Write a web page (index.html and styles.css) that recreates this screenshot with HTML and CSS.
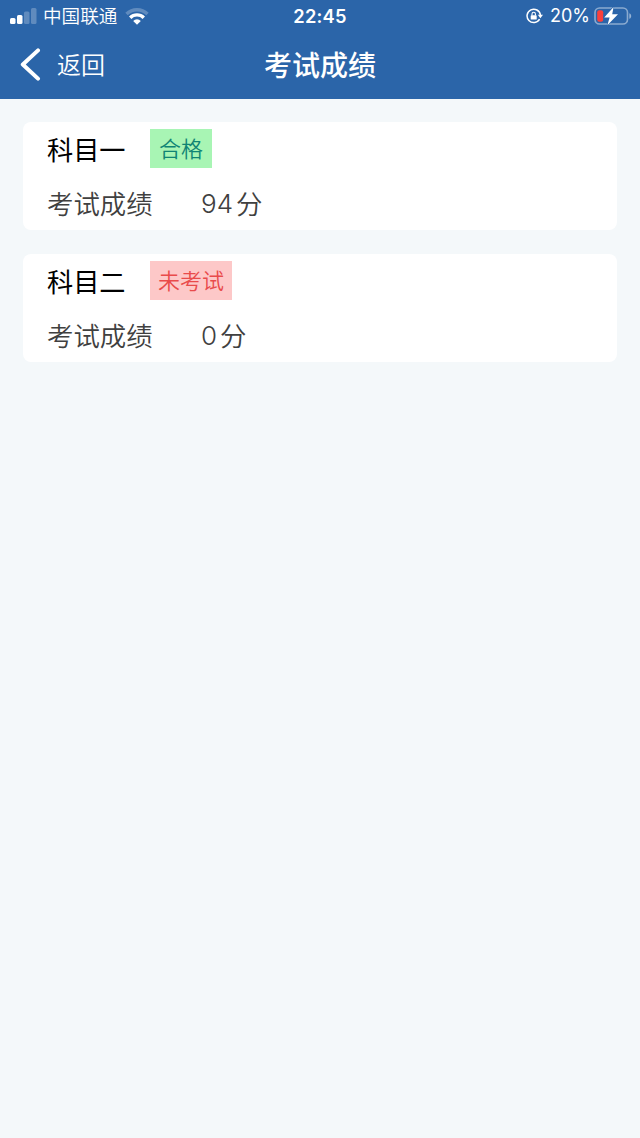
FILE: index.html
```html
<!DOCTYPE html>
<html lang="zh-CN">
<head>
  <meta charset="UTF-8" />
  <meta name="viewport" content="width=device-width, initial-scale=1.0" />
  <title>考试成绩</title>
  <link rel="stylesheet" href="styles.css">
</head>
<body>
  <header class="header">
    <div class="status-bar">
      <div class="status-left">
        <svg class="signal" width="27" height="16" viewBox="0 0 27 16" fill="#fff">
          <rect x="0" y="10" width="5.5" height="6" rx="1.5"/>
          <rect x="7" y="7" width="5.5" height="9" rx="1.5"/>
          <rect x="14" y="3.5" width="5.5" height="12.5" rx="1.5" opacity=".25"/>
          <rect x="21" y="0" width="5.5" height="16" rx="1.5" opacity=".25"/>
        </svg>
        <span class="carrier">中国联通</span>
        <svg class="wifi" width="24" height="17" viewBox="0 0 24 17" fill="none" stroke="#fff" stroke-width="3.4">
          <path d="M1.5 6a15 15 0 0 1 21 0" opacity=".25"/>
          <path d="M5.2 9.7a9.7 9.7 0 0 1 13.6 0"/>
          <path d="M8.2 12.9a5.4 5.4 0 0 1 7.6 0L12 16.7z" fill="#fff" stroke="none"/>
        </svg>
      </div>
      <span class="time">22:45</span>
      <div class="status-right">
        <svg class="lock" width="17" height="16" viewBox="0 0 17 16" fill="none" stroke="#fff">
          <path d="M13.6 11.2A6.7 6.7 0 1 1 14.4 7" stroke-width="1.5"/>
          <path d="M11.8 6.8h5.2l-2.6 3.4z" fill="#fff" stroke="none"/>
          <rect x="4.7" y="7.2" width="6" height="4.4" rx=".7" fill="#fff" stroke="none"/>
          <path d="M6 7.4V6a1.7 1.7 0 0 1 3.4 0v1.4" stroke-width="1.1"/>
        </svg>
        <span class="percent">20%</span>
        <svg class="battery" width="38" height="20" viewBox="0 0 38 20">
          <rect x="1" y="2" width="32.5" height="16" rx="4.5" fill="none" stroke="#fff" stroke-opacity=".45" stroke-width="1.6"/>
          <rect x="3.2" y="4.3" width="6" height="11.4" rx="2" fill="#fb3f3b"/>
          <path d="M35.3 7.2c2.5.8 2.5 4.8 0 5.6z" fill="#fff" opacity=".5"/>
          <path d="M19.6 1L10.2 11.4h5.4L13.4 19.2l10.6-11h-5.8z" fill="#fff" stroke="#2b65a9" stroke-width="1.2" paint-order="stroke"/>
        </svg>
      </div>
    </div>
    <nav class="nav">
      <a class="back">
        <svg width="22" height="34" viewBox="0 0 22 34" fill="none" stroke="#fff" stroke-width="4" stroke-linecap="round" stroke-linejoin="round">
          <path d="M18 2.4L2.8 16.5 18 30.6"/>
        </svg>
        <span>返回</span>
      </a>
      <h1 class="title">考试成绩</h1>
    </nav>
  </header>

  <main class="list">
    <section class="card">
      <div class="subject">
        <h2>科目一</h2>
        <span class="tag pass">合格</span>
      </div>
      <div class="score">
        <span class="label">考试成绩</span>
        <span class="num">94</span>
        <span class="unit">分</span>
      </div>
    </section>
    <section class="card">
      <div class="subject">
        <h2>科目二</h2>
        <span class="tag pending">未考试</span>
      </div>
      <div class="score">
        <span class="label">考试成绩</span>
        <span class="num">0</span>
        <span class="unit">分</span>
      </div>
    </section>
  </main>
</body>
</html>
```
FILE: styles.css
```css
* {
  box-sizing: border-box;
}
body {
  margin: 0;
  min-height: 100vh;
  background-color: #f4f8fa;
  font-family: Inter, "Noto Sans CJK SC", sans-serif;
}
.header {
  height: 99px;
  background-color: #2b65a9;
  color: #fff;
}
.status-bar {
  display: grid;
  grid-template-columns: 1fr auto 1fr;
  align-items: center;
  height: 32px;
  padding: 0 8px 0 10px;
  line-height: 32px;
}
.status-left,
.status-right {
  display: flex;
  align-items: center;
}
.status-right {
  justify-content: flex-end;
}
.carrier {
  margin: 0 8px 0 6px;
  font-size: 18.6px;
  font-weight: 350;
}
.time {
  margin-right: 2px;
  font-size: 18.3px;
  font-weight: 600;
  letter-spacing: 0.2px;
}
.percent {
  margin: 0 4px 0 7px;
  font-size: 18px;
}
.nav {
  display: grid;
  grid-template-columns: 1fr auto 1fr;
  align-items: center;
  height: 66px;
  padding: 0 20px;
}
.back {
  display: flex;
  align-items: center;
  gap: 15px;
  font-size: 24px;
  font-weight: 350;
  line-height: 34px;
}
.back span {
  padding-top: 2px;
}
.title {
  margin: 0;
  padding-top: 2px;
  font-size: 28px;
  font-weight: 500;
  line-height: 40px;
}
.list {
  display: flex;
  flex-direction: column;
  gap: 24px;
  padding: 23px 23px 0;
}
.card {
  height: 108px;
  padding: 7px 24px 0;
  border-radius: 8px;
  background-color: #fff;
}
.subject {
  display: flex;
  align-items: center;
  height: 39px;
}
.subject h2 {
  width: 103px;
  margin: 0;
  padding-top: 3px;
  font-size: 26.2px;
  font-weight: 400;
  line-height: 39px;
  color: #000;
}
.tag {
  height: 39px;
  padding: 0 8px;
  font-size: 22px;
  font-weight: 350;
  line-height: 41px;
}
.pass {
  padding: 0 9px;
  background-color: #a8f5b4;
  color: #108474;
}
.pending {
  background-color: #fdc8c8;
  color: #e94b4b;
}
.score {
  display: flex;
  align-items: center;
  height: 40px;
  margin-top: 16px;
  font-size: 26.4px;
  font-weight: 350;
  line-height: 40px;
  color: #404040;
}
.label {
  width: 154px;
}
.num {
  font-size: 26px;
}
.unit {
  margin-left: 3px;
}
```
